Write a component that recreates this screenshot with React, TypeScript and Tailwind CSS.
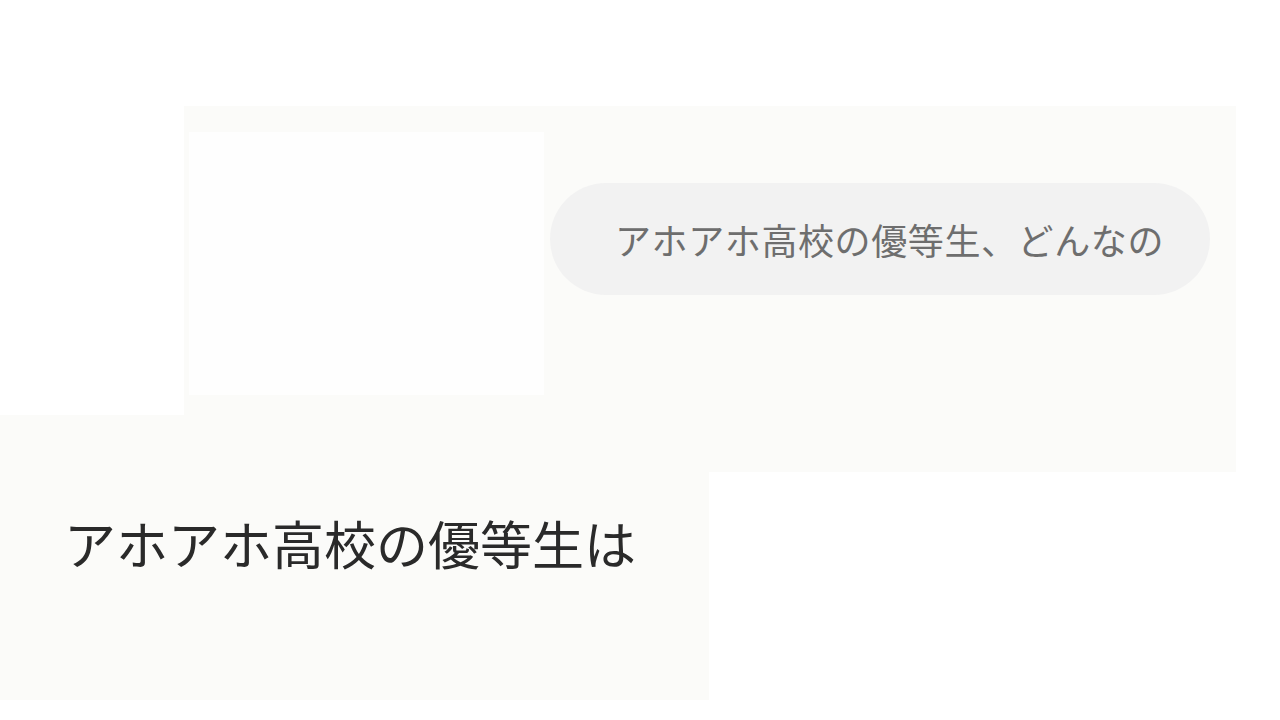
const jp = { fontFamily: '"Noto Sans CJK JP", "Noto Sans", sans-serif' };

export default function App() {
  return (
    <div className="w-[1280px] h-[720px] bg-white overflow-hidden" style={jp}>
      {/* chat area */}
      <div className="mt-[106px] ml-[184px] w-[1052px] h-[309px] bg-[#fbfbf9] flex items-start">
        <div className="ml-[5px] mt-[26px] w-[355px] h-[263px] bg-[#fefefe]" />
        <div className="ml-[6px] mt-[77px] w-[660px] h-[112px] rounded-full bg-[#f2f2f2] flex items-center pl-[65px]">
          <span className="text-[36px] leading-none text-[#6e6e6e] tracking-[0.6px]">
            アホアホ高校の優等生、どんなの
          </span>
        </div>
      </div>

      {/* reply area */}
      <div className="flex items-start">
        <div className="w-[709px] h-[285px] bg-[#fbfbf9] pl-[64px] pt-[102px]">
          <p className="text-[52px] leading-none text-[#2a2a2a]">アホアホ高校の優等生は</p>
        </div>
        <div className="w-[527px] h-[57px] bg-[#fbfbf9]" />
      </div>
    </div>
  );
}
